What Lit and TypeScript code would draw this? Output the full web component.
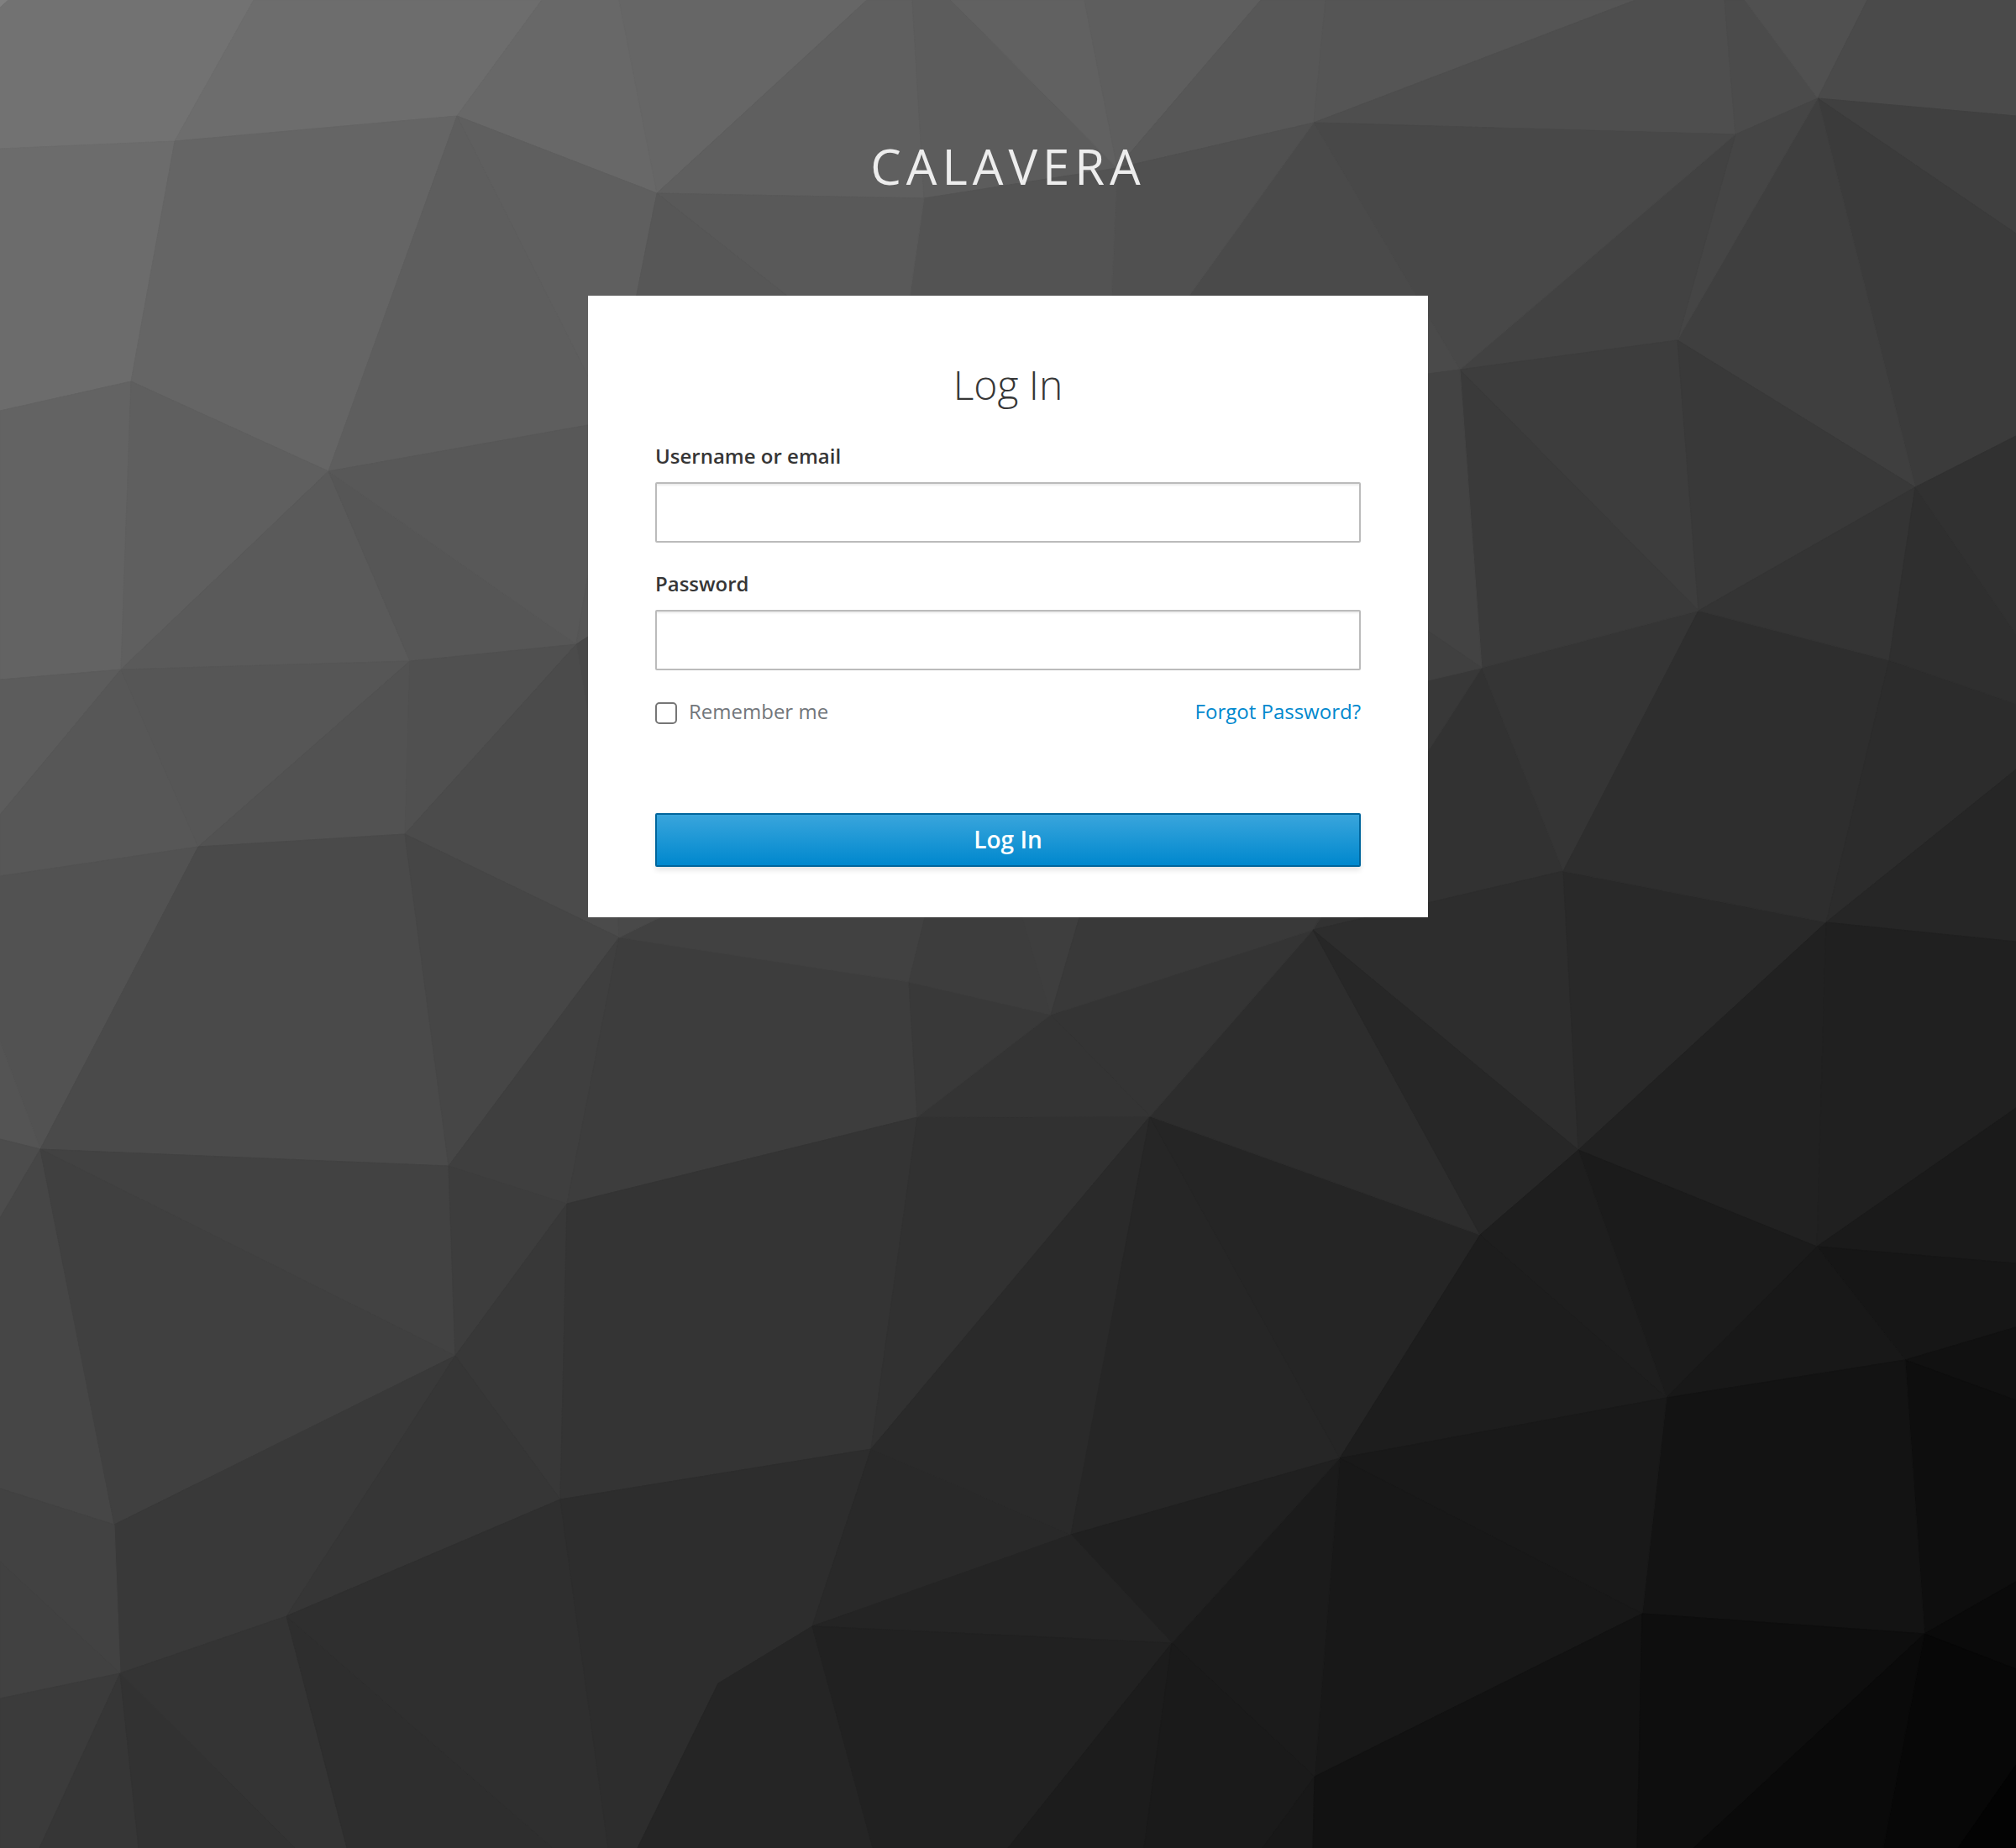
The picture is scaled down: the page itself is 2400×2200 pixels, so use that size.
import { LitElement, html, svg, css } from "lit";
import { customElement, state } from "lit/decorators.js";

type Point = [number, number];

/** Inner vertices of the low-poly mesh. */
const V: Record<string, Point> = {
  A: [208, 168], B: [544, 138], C: [156, 454], D: [391, 561], E: [782, 230],
  F: [144, 797], G: [488, 787], H: [686, 767], I: [236, 1008], J: [482, 993],
  K: [737, 1116], M: [48, 1368], N: [534, 1388], O: [675, 1433], P: [1082, 1169],
  Q: [1251, 1208], R: [1092, 1330], S: [1369, 1329], T: [1563, 1107], U: [1037, 1725],
  W: [1595, 1736], X: [542, 1614], Y: [136, 1815], Z: [667, 1785], VV: [1275, 1827],
  a: [341, 1924], b: [143, 1992], c: [967, 1936], d: [855, 2004], e: [1762, 1470],
  f: [1984, 1664], g: [2163, 1484], h: [2268, 1619], i: [1395, 1956], j: [1565, 2115],
  k: [1955, 1921], l: [2291, 1945], m: [2022, 727], n: [1764, 795], o: [1861, 1037],
  p: [2174, 1098], q: [1879, 1369], r: [2249, 786], s: [2280, 580], t: [2164, 117],
  u: [2066, 160], v: [1997, 405], w: [1738, 440], x: [1564, 146], y: [1330, 200],
  z: [1100, 236],
};

/** Each facet: grey level (hex byte), then vertices by name or as "x,y". */
const FACETS = `
80 0,0 10,0 0,9
72 10,0 302,0 A 0,177 0,9
6d 302,0 645,0 B A
6c 0,177 A C 0,489
65 A B D C
68 645,0 737,0 E B
66 737,0 1032,0 E
5f B E 756,360 700,448
5e B 700,448 700,506 D
63 0,489 C F 0,809
5f C D F
5a D G F
56 D H G
58 D 700,506 700,684 H
5c 0,809 F 0,970
57 F I 0,1043 0,970
56 F G I
52 G J I
50 G H J
56 H 700,684 700,758
48 H 700,758 700,850
4b H 700,850 736,1092 K J
52 0,1043 I M 0,1240
54 0,1240 M 0,1356
4a I J N M
46 J K N
3f K O N
3d K P R O
4c 0,1356 M 0,1450
46 0,1450 M Y 0,1772
42 M N X
40 M X Y
3d N O X
38 X O Z
39 Y X a b
36 X Z a
34 O R U Z
31 R S U
42 0,1772 Y b 0,1859
41 0,1859 b 0,2022
3b 0,2022 b 47,2200 0,2200
36 b 165,2200 47,2200
32 b 352,2200 165,2200
34 b a 413,2200 352,2200
2e a 658,2200 413,2200
2f a Z 724,2200 658,2200
2d Z U c d 759,2200 724,2200
25 d c 1039,2200 759,2200
29 U VV c
2a U S VV
26 S VV W
25 S W e
2d S T e
34 Q S T
34 Q R S
39 P Q R
41 K 786,1092 1101,1092 P
49 K 736,1092 786,1092
3d P 1101,1092 1217,1092 Q
3e Q 1217,1092 1285,1092
39 Q 1285,1092 1571,1092 T
32 n T o
38 n T 1571,1092 1700,810
2d T o q
27 T q e
29 o p q
21 q p g
35 n m o
2e m r p o
2c r 2400,838 2400,916 p
26 p 2400,916 2400,1121
20 p 2400,1121 2400,1319 g
1a g 2400,1319 2400,1504
16 g 2400,1504 2400,1580 h
11 h 2400,1580 2400,1667
0e h 2400,1667 2400,1883 l
0a l 2400,1883 2400,1987
07 l 2400,1987 2400,2101 2331,2200 2242,2200
03 2400,2101 2400,2200 2331,2200
1b q g f
1e e q f
1d e f W
18 g h f
13 f h l k
19 W f k
18 W k j
1b W j i
20 VV W i
24 c VV i
21 c i 1200,2200 1039,2200
1c i 1362,2200 1200,2200
1a i j 1503,2200 1362,2200
18 j 1563,2200 1503,2200
12 j k 1949,2200 1563,2200
0e k l 2016,2200 1949,2200
0a l 2242,2200 2016,2200
5f 1032,0 1086,0 z E
5c 1086,0 1132,0 y z
61 1132,0 1291,0 y
5e 1291,0 1501,0 y
57 1501,0 1578,0 x y
55 1578,0 1947,0 x
4e 1947,0 2053,0 u x
4b 2053,0 2077,0 t u
50 2077,0 2223,0 t
4a 2223,0 2400,0 2400,138 t
40 t 2400,138 2400,278
3b t 2400,278 2400,519 s
3f t s v
45 u t v
42 u v w
48 x u w
4a x w 1700,445 1410,360
50 y x 1410,360 1323,360
53 z y 1323,360 1082,360
59 E z 1082,360 947,360
57 E 947,360 756,360
3d w v m
39 v s m
3a w m n
43 w n 1700,751 1700,445
40 n 1700,751 1700,810
34 m s r
2f s r 2400,838 2400,755
31 s 2400,519 2400,755
`
  .trim()
  .split("\n")
  .map((line) => {
    const [level, ...names] = line.split(" ");
    return {
      fill: `#${level}${level}${level}`,
      points: names.map((n) => (n.includes(",") ? n : V[n].join(","))).join(" "),
    };
  });

@customElement("poly-backdrop")
export class PolyBackdrop extends LitElement {
  static styles = css`
    :host {
      display: block;
    }
    .mesh {
      display: block;
      width: 100%;
      height: 100%;
    }
  `;

  render() {
    return html`<svg class="mesh" viewBox="0 0 2400 2200" preserveAspectRatio="xMidYMid slice" aria-hidden="true">
      ${FACETS.map(
        (f) => svg`<polygon points=${f.points} fill=${f.fill} stroke=${f.fill} stroke-width="1" stroke-linejoin="round"></polygon>`
      )}
    </svg>`;
  }
}

@customElement("login-card")
export class LoginCard extends LitElement {
  static styles = css`
    :host {
      display: block;
      box-sizing: border-box;
      width: 1000px;
      padding: 77px 80px 60px;
      background: #fff;
      color: #363636;
      font-size: 24px;
      line-height: 40px;
    }
    .title {
      margin: 0 0 36px;
      font-size: 48px;
      font-weight: 300;
      line-height: 58px;
      text-align: center;
    }
    .form {
      display: flex;
      flex-direction: column;
    }
    .group {
      display: flex;
      flex-direction: column;
      gap: 11px;
      margin-bottom: 29px;
    }
    .label {
      font-weight: 600;
    }
    .input {
      box-sizing: border-box;
      width: 100%;
      height: 72px;
      margin: 0;
      padding: 4px 20px;
      border: 2px solid #bbb;
      border-radius: 2px;
      outline: none;
      background: #fff;
      box-shadow: inset 0 2px 2px rgba(3, 3, 3, 0.075);
      color: inherit;
      font: inherit;
    }
    .options {
      display: flex;
      align-items: center;
      justify-content: space-between;
      margin-bottom: 101px;
    }
    .remember {
      display: flex;
      align-items: center;
      gap: 14px;
      color: #72767b;
    }
    .check {
      appearance: none;
      box-sizing: border-box;
      width: 26px;
      height: 26px;
      margin: 4px 0 0;
      border: 2px solid #767676;
      border-radius: 5px;
      background: #fff;
    }
    .link {
      color: #0088ce;
      text-decoration: none;
    }
    .submit {
      box-sizing: border-box;
      width: 100%;
      height: 64px;
      margin: 0;
      padding: 0 0 2px;
      border: 2px solid #00659c;
      border-radius: 2px;
      background: linear-gradient(#39a5dc, #0088ce) padding-box;
      box-shadow: 0 4px 6px rgba(3, 3, 3, 0.1);
      color: #fff;
      font: 600 28px/58px "Open Sans", "Noto Sans", sans-serif;
    }
  `;

  @state() private remember = false;

  private toggle(e: Event) {
    this.remember = (e.target as HTMLInputElement).checked;
  }

  render() {
    return html`
      <h1 class="title">Log In</h1>
      <form class="form" @submit=${(e: Event) => e.preventDefault()}>
        <div class="group">
          <label class="label" for="username">Username or email</label>
          <input class="input" id="username" type="text" autocomplete="off" />
        </div>
        <div class="group">
          <label class="label" for="password">Password</label>
          <input class="input" id="password" type="password" autocomplete="off" />
        </div>
        <div class="options">
          <label class="remember">
            <input class="check" type="checkbox" .checked=${this.remember} @change=${this.toggle} />
            <span>Remember me</span>
          </label>
          <a class="link" href="#">Forgot Password?</a>
        </div>
        <button class="submit" type="submit">Log In</button>
      </form>
    `;
  }
}

@customElement("app-root")
export class AppRoot extends LitElement {
  static styles = css`
    :host {
      display: block;
      position: relative;
      width: 100%;
      height: 2200px;
      overflow: hidden;
      background: #333;
      font-family: "Open Sans", "Noto Sans", sans-serif;
    }
    .backdrop {
      position: absolute;
      inset: 0;
    }
    .page {
      position: relative;
      display: flex;
      flex-direction: column;
      align-items: center;
    }
    .brand {
      box-sizing: border-box;
      height: 352px;
      padding-top: 163px;
      color: #ededed;
      font-size: 58px;
      letter-spacing: 6px;
      line-height: 70px;
      text-transform: uppercase;
      white-space: nowrap;
    }
  `;

  render() {
    return html`
      <poly-backdrop class="backdrop"></poly-backdrop>
      <div class="page">
        <header class="brand">Calavera</header>
        <login-card></login-card>
      </div>
    `;
  }
}
